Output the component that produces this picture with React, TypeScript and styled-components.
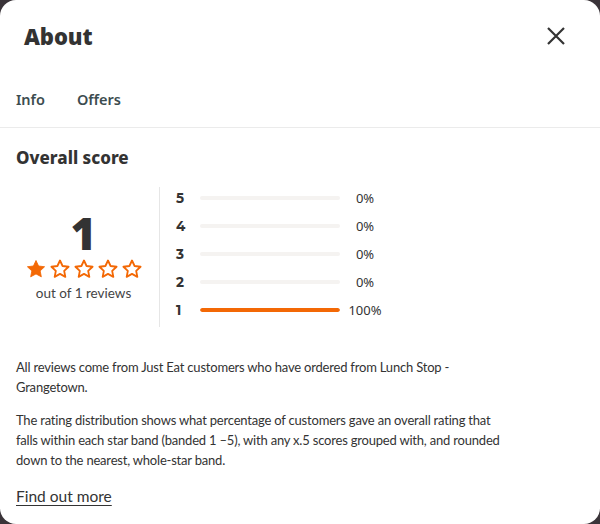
import React, {FC} from "react";
import styled, {createGlobalStyle} from "styled-components";

const GlobalStyle = createGlobalStyle`
	html, body {
		margin: 0;
		padding: 0;
		background: #3a3439;
	}
	body {
		font-family: "Noto Sans", "Liberation Sans", sans-serif;
		color: #242e30;
	}
`;

const Modal = styled.div`
	width: 600px;
	height: 524px;
	box-sizing: border-box;
	background: #fff;
	border-radius: 16px;
	overflow: hidden;
	display: flex;
	flex-direction: column;
`;

const Header = styled.div`
	display: flex;
	align-items: center;
	justify-content: space-between;
	padding: 20px 32px 0 24px;
	height: 52px;
	box-sizing: border-box;
`;

const Title = styled.h1`
	margin: 0;
	font-family: "Noto Sans", sans-serif;
	font-weight: 900;
	font-size: 22px;
	letter-spacing: -0.1px;
	color: #333;
`;

const CloseButton = styled.button`
	border: 0;
	background: none;
	padding: 0;
	width: 24px;
	height: 24px;
	display: flex;
	align-items: center;
	justify-content: center;
	color: #333;
`;

const Tabs = styled.div`
	display: flex;
	gap: 32px;
	padding: 0 16px;
	height: 76px;
	align-items: flex-end;
	padding-bottom: 18px;
	box-sizing: border-box;
	border-bottom: 1px solid #ebebeb;
`;

const Tab = styled.span`
	font-size: 14.5px;
	font-weight: 600;
	color: #3c4c4f;
`;

const Body = styled.div`
	padding: 18px 16px 0;
`;

const SectionTitle = styled.h2`
	margin: 0;
	font-weight: 800;
	font-size: 17px;
	color: #333;
`;

const ScoreRow = styled.div`
	display: flex;
	margin-top: 18px;
`;

const ScoreSummary = styled.div`
	width: 144px;
	box-sizing: border-box;
	padding-right: 8px;
	display: flex;
	flex-direction: column;
	align-items: center;
	justify-content: center;
	border-right: 1px solid #e6e6e6;
	height: 140px;
`;

const BigScore = styled.div`
	font-size: 44px;
	font-weight: 900;
	line-height: 40px;
	color: #333;
`;

const Stars = styled.div`
	display: flex;
	gap: 4px;
	margin-top: 6px;
`;

const ReviewCount = styled.div`
	font-family: "Lato", "Noto Sans", sans-serif;
	font-size: 13.5px;
	color: #444;
	margin-top: 6px;
`;

const Distribution = styled.div`
	display: flex;
	flex-direction: column;
	gap: 10px;
	padding-left: 16px;
	padding-top: 2px;
`;

const BandRow = styled.div`
	display: grid;
	grid-template-columns: 24px 140px 44px;
	align-items: center;
	height: 18px;
`;

const BandLabel = styled.span`
	font-family: "Montserrat", "Noto Sans", sans-serif;
	font-weight: 700;
	font-size: 13.5px;
	color: #333;
`;

const Track = styled.div`
	height: 4px;
	border-radius: 2px;
	background: #f5f3f1;
	overflow: hidden;
`;

const Fill = styled.div`
	height: 100%;
	background: #f36805;
	border-radius: 2px;
`;

const Percent = styled.span`
	font-size: 13px;
	color: #333;
	text-align: center;
	padding-left: 6px;
`;

const Paragraph = styled.p`
	margin: 0;
	max-width: 485px;
	font-family: "Lato", "Noto Sans", sans-serif;
	font-size: 13px;
	letter-spacing: -0.2px;
	line-height: 20px;
	color: #333;
`;

const Notes = styled.div`
	display: flex;
	flex-direction: column;
	gap: 13px;
	margin-top: 30px;
`;

const MoreLink = styled.a`
	display: inline-block;
	margin-top: 17px;
	font-family: "Lato", "Noto Sans", sans-serif;
	font-size: 15.5px;
	color: #333;
	text-decoration: underline;
	text-underline-offset: 3px;
`;

const Star: FC<{filled: boolean}> = ({filled}) => (
	<svg width="20" height="20" viewBox="0 0 24 24">
		<path
			d="M12 1.8l3.1 6.6 7.2.9-5.3 5 1.4 7.1L12 17.9l-6.4 3.5 1.4-7.1-5.3-5 7.2-.9z"
			fill={filled ? "#f36805" : "none"}
			stroke="#f36805"
			strokeWidth={filled ? 1 : 2.2}
			strokeLinejoin="round"
		/>
	</svg>
);

const bands = [
	{star: 5, pct: 0},
	{star: 4, pct: 0},
	{star: 3, pct: 0},
	{star: 2, pct: 0},
	{star: 1, pct: 100},
];

export default function App() {
	return (
		<>
			<GlobalStyle />
			<Modal>
				<Header>
					<Title>About</Title>
					<CloseButton aria-label="Close">
						<svg width="20" height="20" viewBox="0 0 20 20">
							<path d="M2 2L18 18M18 2L2 18" stroke="#333" strokeWidth="2.2" />
						</svg>
					</CloseButton>
				</Header>
				<Tabs>
					<Tab>Info</Tab>
					<Tab>Offers</Tab>
				</Tabs>
				<Body>
					<SectionTitle>Overall score</SectionTitle>
					<ScoreRow>
						<ScoreSummary>
							<BigScore>1</BigScore>
							<Stars>
								{[1, 2, 3, 4, 5].map(i => <Star key={i} filled={i <= 1} />)}
							</Stars>
							<ReviewCount>out of 1 reviews</ReviewCount>
						</ScoreSummary>
						<Distribution>
							{bands.map(band => (
								<BandRow key={band.star}>
									<BandLabel>{band.star}</BandLabel>
									<Track>
										<Fill style={{width: `${band.pct}%`}} />
									</Track>
									<Percent>{band.pct}%</Percent>
								</BandRow>
							))}
						</Distribution>
					</ScoreRow>
					<Notes>
						<Paragraph>
							All reviews come from Just Eat customers who have ordered from Lunch Stop - Grangetown.
						</Paragraph>
						<Paragraph>
							The rating distribution shows what percentage of customers gave an overall rating that falls
							within each star band (banded 1 –5), with any x.5 scores grouped with, and rounded down to the
							nearest, whole-star band.
						</Paragraph>
					</Notes>
					<MoreLink href="#">Find out more</MoreLink>
				</Body>
			</Modal>
		</>
	);
}
